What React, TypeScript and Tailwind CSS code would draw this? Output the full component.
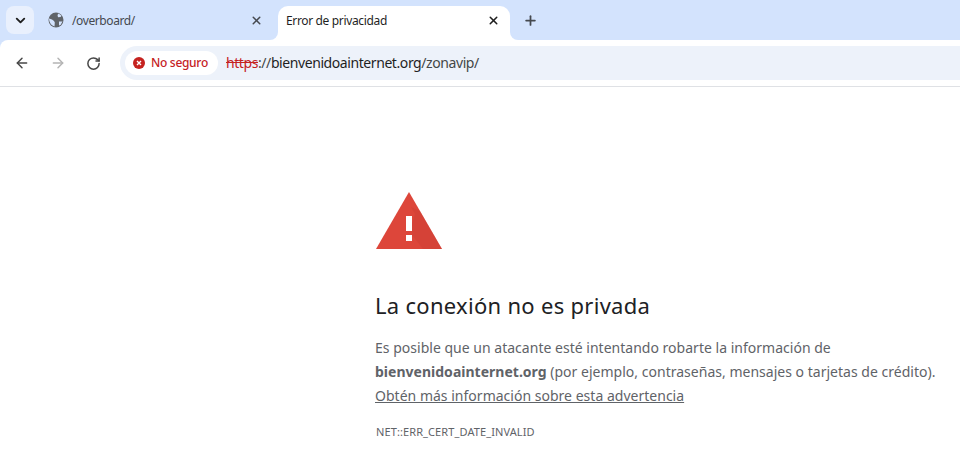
import { ArrowLeft, ArrowRight, ChevronDown, Plus, RotateCw, X } from "lucide-react";

const font = { fontFamily: '"Noto Sans", sans-serif' };

function Globe() {
  return (
    <svg width="16" height="16" viewBox="0 0 16 16" className="shrink-0">
      <circle cx="8" cy="8" r="7.5" fill="#5f6368" />
      <path d="M1 6.5 L4 7.5 L6 9 L6.8 10.5 L6.5 14.5 L5.5 14 C3 13 1 10 1 6.5 Z M10.5 1.5 L13.5 3.8 L12.5 5 L10 5.2 L9.5 3 Z M11 9.5 L14.5 9.5 L12.5 13 L11 13.5 Z" fill="#d3e3fd" />
    </svg>
  );
}

function Warning() {
  return (
    <svg width="66" height="58" viewBox="0 0 66 58" className="block">
      <path d="M33 0 L66 57 L0 57 Z" fill="#dd463a" />
      <path d="M35 15 L39 22 L36 32 L36 43 L47 57 L66 57 L44 19 Z" fill="#c73d33" opacity="0.35" />
      <rect x="30" y="24" width="6" height="15" fill="#fff" />
      <rect x="30" y="43" width="6" height="6" fill="#fff" />
    </svg>
  );
}

export default function App() {
  return (
    <div className="w-[960px] h-[475px] overflow-hidden bg-white" style={font}>
      <div className="h-10 bg-[#d3e3fd] flex items-end relative">
        <div className="absolute left-[6px] top-[6px] w-7 h-7 rounded-lg bg-[#e9f0fd] flex items-center justify-center">
          <ChevronDown size={15} strokeWidth={3} className="text-[#1f1f1f]" />
        </div>
        <div className="ml-[48px] w-[221px] h-[34px] pb-[6px] flex items-center gap-[8px]">
          <Globe />
          <span className="text-[12px] text-[#45494f] tracking-[-0.4px] translate-y-[1px]">/overboard/</span>
          <X size={13} strokeWidth={2.8} className="ml-auto mr-[6px] text-[#45494f]" />
        </div>
        <div className="ml-[9px] w-[232px] h-[34px] pb-[6px] bg-white rounded-t-[10px] flex items-center pl-[8px] pr-[10px] relative">
          <div className="absolute -left-[8px] bottom-0 w-2 h-2 bg-white">
            <div className="w-full h-full bg-[#d3e3fd] rounded-br-[8px]" />
          </div>
          <div className="absolute -right-[8px] bottom-0 w-2 h-2 bg-white">
            <div className="w-full h-full bg-[#d3e3fd] rounded-bl-[8px]" />
          </div>
          <span className="text-[12px] text-[#1f1f1f] tracking-[-0.35px] translate-y-[1px]">Error de privacidad</span>
          <X size={13} strokeWidth={2.8} className="ml-auto text-[#1f1f1f]" />
        </div>
        <div className="ml-[13px] h-[34px] pb-[6px] flex items-center">
          <Plus size={15} strokeWidth={2.8} className="text-[#45494f]" />
        </div>
      </div>
      <div className="bg-[#d3e3fd]">
        <div className="h-[47px] bg-white border-b border-[#dfe1e5] flex items-center rounded-tl-[8px]">
          <div className="w-[120px] flex items-center pl-[14px] gap-[20px] shrink-0">
            <ArrowLeft size={16} strokeWidth={2.2} className="text-[#474747]" />
            <ArrowRight size={16} strokeWidth={2.2} className="text-[#b4b4b4]" />
            <RotateCw size={15} strokeWidth={2.4} className="text-[#474747]" />
          </div>
          <div className="flex-1 h-[34px] -mt-[1px] bg-[#edf2fa] rounded-l-[17px] flex items-center pl-[5px]">
            <div className="h-6 w-[93px] bg-white rounded-full flex items-center pl-[8px] gap-[6px]">
              <svg width="12" height="12" viewBox="0 0 12 12" className="shrink-0">
                <circle cx="6" cy="6" r="6" fill="#c5221f" />
                <path d="M4 4 L8 8 M8 4 L4 8" stroke="#fff" strokeWidth="1.4" />
              </svg>
              <span className="text-[12px] font-medium text-[#c5221f] tracking-[-0.3px] whitespace-nowrap">No seguro</span>
            </div>
            <div className="ml-[8px] text-[14px] tracking-[-0.42px] text-[#444746] whitespace-nowrap">
              <span className="text-[#c5221f] line-through">https</span>
              <span>://</span>
              <span className="text-[#1f1f1f]">bienvenidoainternet.org</span>
              <span>/zonavip/</span>
            </div>
          </div>
        </div>
      </div>
      <main className="pl-[376px] pt-[105px] pr-2">
        <Warning />
        <h1 className="mt-[40px] -ml-[1px] text-[22px] leading-[30px] font-normal text-[#202124] tracking-[0.29px] whitespace-nowrap">
          La conexión no es privada
        </h1>
        <div className="mt-[16px] -ml-[1px] text-[14px] leading-6 text-[#5f6368] tracking-[0.015px] whitespace-nowrap">
          <p>Es posible que un atacante esté intentando robarte la información de</p>
          <p>
            <strong className="font-bold">bienvenidoainternet.org</strong> (por ejemplo, contraseñas, mensajes o tarjetas de crédito).
          </p>
          <p className="underline">Obtén más información sobre esta advertencia</p>
        </div>
        <p className="mt-[16px] text-[11px] leading-4 text-[#5f6368] tracking-[0.1px] whitespace-nowrap">NET::ERR_CERT_DATE_INVALID</p>
      </main>
    </div>
  );
}
